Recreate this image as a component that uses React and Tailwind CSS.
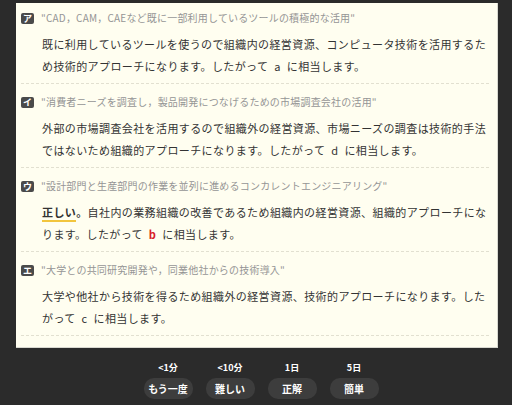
import React from "react";

const SP = "\u2002";

const ITEMS = [
  {
    mark: "ア",
    title: "CAD，CAM，CAEなど既に一部利用しているツールの積極的な活用",
    body: (
      <>既に利用しているツールを使うので組織内の経営資源、コンピュータ技術を活用するため技術的アプローチになります。したがって{SP}a{SP}に相当します。</>
    ),
  },
  {
    mark: "イ",
    title: "消費者ニーズを調査し，製品開発につなげるための市場調査会社の活用",
    body: (
      <>外部の市場調査会社を活用するので組織外の経営資源、市場ニーズの調査は技術的手法ではないため組織的アプローチになります。したがって{SP}d{SP}に相当します。</>
    ),
  },
  {
    mark: "ウ",
    title: "設計部門と生産部門の作業を並列に進めるコンカレントエンジニアリング",
    body: (
      <>
        <span className="font-bold border-b-2 border-[#f2c53d]">正しい</span>
        <span className="font-bold">。</span>自社内の業務組織の改善であるため組織内の経営資源、組織的アプローチになります。したがって{SP}<span className="font-bold text-[#d8202a]">b</span>{SP}に相当します。
      </>
    ),
  },
  {
    mark: "エ",
    title: "大学との共同研究開発や，同業他社からの技術導入",
    body: (
      <>大学や他社から技術を得るため組織外の経営資源、技術的アプローチになります。したがって{SP}c{SP}に相当します。</>
    ),
  },
];

const BUTTONS = [
  { time: "<1分", label: "もう一度" },
  { time: "<10分", label: "難しい" },
  { time: "1日", label: "正解" },
  { time: "5日", label: "簡単" },
];

export default function App() {
  return (
    <div
      className="w-[512px] h-[405px] bg-[#2b2b2b] overflow-hidden flex flex-col"
      style={{ fontFamily: '"Noto Sans CJK JP", "Noto Sans", sans-serif' }}
    >
      <div className="ml-4 mt-[3px] w-[482px] h-[345px] bg-[#fffef0] border-r border-b border-[#d8d8d0] px-[5px] pr-[8px]">
        {ITEMS.map((it, i) => (
          <div
            key={it.mark}
            className={`${i === 0 ? "pt-[8px]" : "pt-[11px]"} pb-[6px] border-b border-dashed border-[#e2e0d0]`}
          >
            <div className="flex items-center gap-[7px] h-[14px]">
              <span className="w-[13px] h-[11px] rounded-[2px] bg-[#4a4a4a] text-white text-[9px] leading-[11px] font-bold flex items-center justify-center">
                {it.mark}
              </span>
              <span className="text-[10px] leading-[14px] tracking-[0.2px] text-[#959595]">
                "{it.title}"
              </span>
            </div>
            <p className="mt-[8px] pl-[21px] text-[11px] leading-[22px] tracking-[0.4px] text-[#333333]">
              {it.body}
            </p>
          </div>
        ))}
      </div>

      <div className="flex-1 flex justify-center gap-[13px] pt-[14px] pl-[10px]">
        {BUTTONS.map((b) => (
          <div key={b.label} className="flex flex-col items-center w-[49px]">
            <div className="text-[9px] leading-[12px] font-bold text-white">{b.time}</div>
            <button className="mt-[4px] w-[49px] h-[21px] rounded-[10px] bg-[#3d3d3d] text-white text-[10px] font-bold flex items-center justify-center">
              {b.label}
            </button>
          </div>
        ))}
      </div>
    </div>
  );
}
